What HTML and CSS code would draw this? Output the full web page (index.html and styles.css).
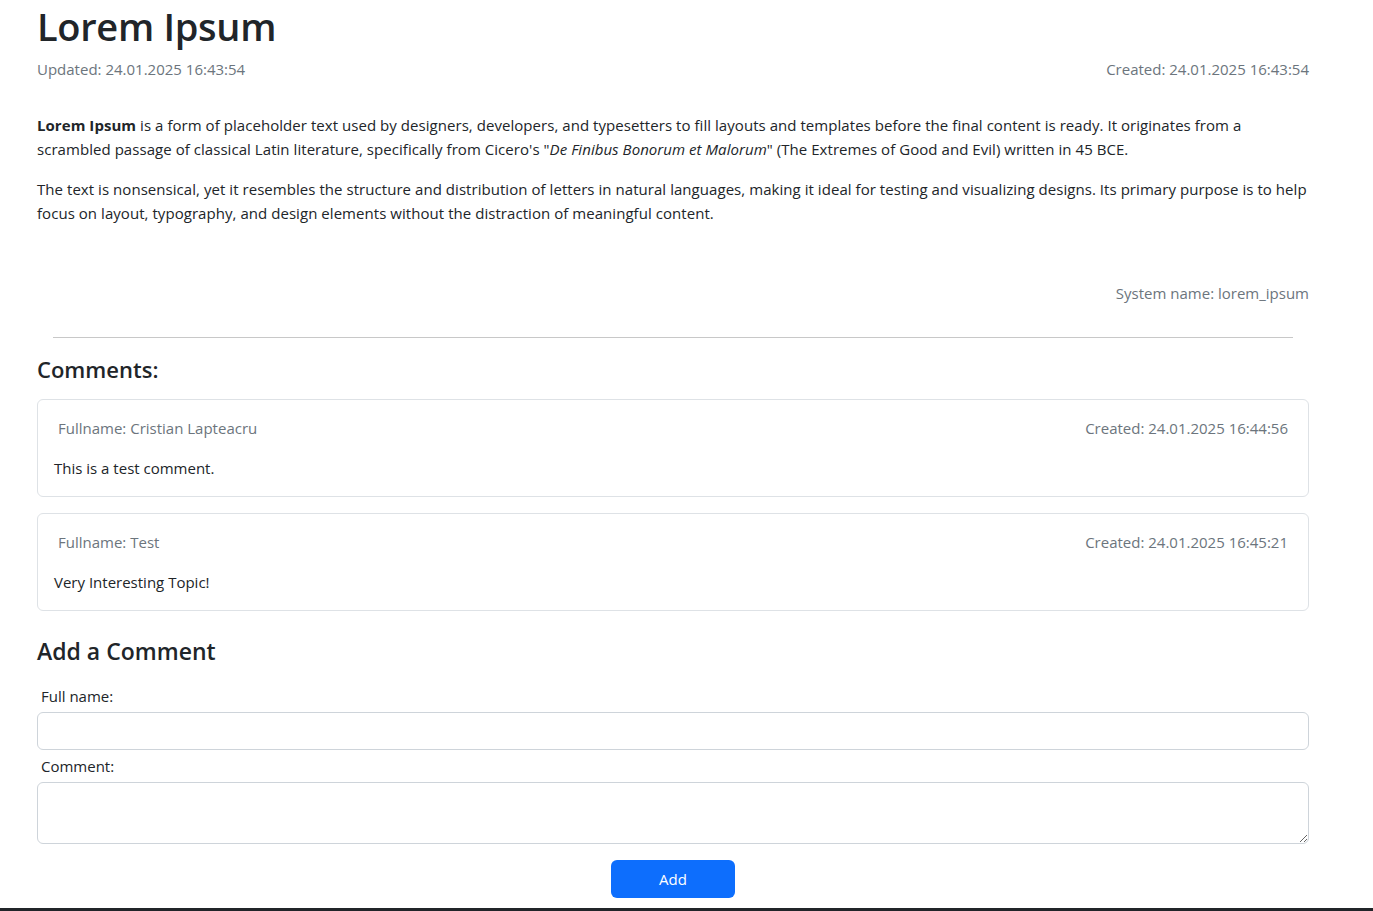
FILE: index.html
```html
<!DOCTYPE html>
<html lang="en">
<head>
<meta charset="utf-8">
<title>Lorem Ipsum</title>
<link rel="stylesheet" href="styles.css">
</head>
<body>
<main class="page">
  <h1 class="title">Lorem Ipsum</h1>
  <div class="meta">
    <span>Updated: 24.01.2025 16:43:54</span>
    <span>Created: 24.01.2025 16:43:54</span>
  </div>
  <div class="content">
    <p><strong>Lorem Ipsum</strong> is a form of placeholder text used by designers, developers, and typesetters to fill layouts and templates before the final content is ready. It originates from a scrambled passage of classical Latin literature, specifically from Cicero's "<em>De Finibus Bonorum et Malorum</em>" (The Extremes of Good and Evil) written in 45 BCE.</p>
    <p>The text is nonsensical, yet it resembles the structure and distribution of letters in natural languages, making it ideal for testing and visualizing designs. Its primary purpose is to help focus on layout, typography, and design elements without the distraction of meaningful content.</p>
  </div>
  <div class="sysname">System name: lorem_ipsum</div>
  <hr class="divider">
  <h4 class="section-title">Comments:</h4>
  <div class="card">
    <div class="card-head">
      <span>Fullname: Cristian Lapteacru</span>
      <span>Created: 24.01.2025 16:44:56</span>
    </div>
    <p class="card-text">This is a test comment.</p>
  </div>
  <div class="card">
    <div class="card-head">
      <span>Fullname: Test</span>
      <span>Created: 24.01.2025 16:45:21</span>
    </div>
    <p class="card-text">Very Interesting Topic!</p>
  </div>
  <h3 class="form-title">Add a Comment</h3>
  <form class="form">
    <label class="label" for="fullname">Full name:</label>
    <input class="input" id="fullname" type="text">
    <label class="label" for="comment">Comment:</label>
    <textarea class="textarea" id="comment"></textarea>
    <div class="actions"><button class="btn" type="button">Add</button></div>
  </form>
</main>
<footer class="footer"></footer>
</body>
</html>
```
FILE: styles.css
```css
* { box-sizing: border-box; }
html, body { margin: 0; padding: 0; }
body {
  font-family: "Open Sans", "Noto Sans", sans-serif;
  font-size: 15px;
  line-height: 24px;
  color: #212529;
  background: #fff;
}
.page {
  padding: 0 64px 0 37px;
}
.title {
  margin: 0;
  padding-top: 3px;
  font-size: 38px;
  font-weight: 600;
  line-height: 46px;
  letter-spacing: -0.3px;
}
.meta {
  display: flex;
  justify-content: space-between;
  color: #6c757d;
  margin-top: 8px;
}
.content { margin-top: 32px; letter-spacing: 0.05px; }
.content p { margin: 0 0 16px; }
.content strong { font-weight: 700; }
.sysname {
  text-align: right;
  color: #6c757d;
  margin-top: 56px;
}
.divider {
  margin: 32px 16px 0;
  border: 0;
  border-top: 1px solid #c8c8c8;
  height: 0;
}
.section-title {
  margin: 17px 0 0;
  font-size: 22px;
  font-weight: 600;
  line-height: 28px;
}
.card {
  margin-top: 16px;
  border: 1px solid #dee2e6;
  border-radius: 6px;
  padding: 16px 20px 16px 16px;
  height: 98px;
}
.card-head {
  display: flex;
  justify-content: space-between;
  color: #6c757d;
  padding-left: 4px;
}
.card-text { margin: 16px 0 0; }
.form-title {
  margin: 25px 0 0;
  font-size: 23px;
  font-weight: 600;
  line-height: 30px;
}
.form { margin-top: 18px; display: flex; flex-direction: column; }
.label { padding-left: 4px; margin-bottom: 4px; line-height: 24px; }
.input {
  height: 38px;
  border: 1px solid #ced4da;
  border-radius: 6px;
  margin-bottom: 4px;
  font: inherit;
}
.textarea {
  height: 62px;
  border: 1px solid #ced4da;
  border-radius: 6px;
  font: inherit;
  resize: vertical;
}
.actions { display: flex; justify-content: center; margin-top: 16px; }
.btn {
  width: 124px;
  height: 38px;
  background: #0d6efd;
  color: #fff;
  border: 0;
  border-radius: 6px;
  font: inherit;
  font-size: 15px;
}
.footer {
  margin-top: 10px;
  height: 40px;
  background: #212529;
}
```
